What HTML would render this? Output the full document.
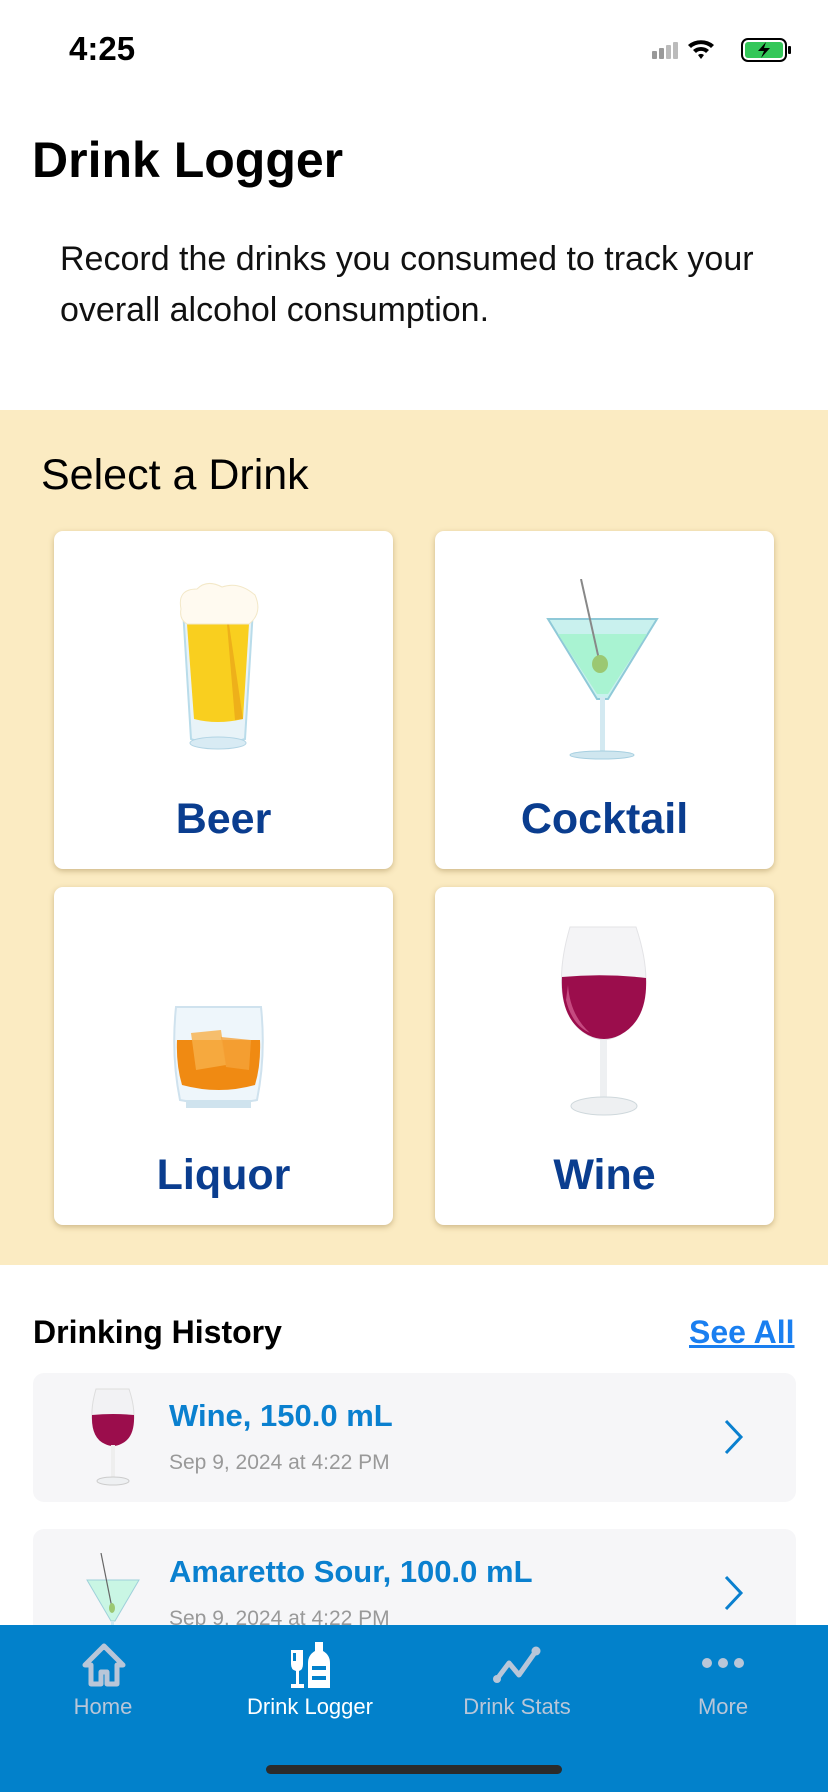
<!DOCTYPE html>
<html><head><meta charset="utf-8"><style>
*{margin:0;padding:0;box-sizing:border-box}
body{width:828px;height:1792px;position:relative;overflow:hidden;background:#fff;font-family:"Liberation Sans",sans-serif}
.abs{position:absolute}
.card{position:absolute;width:339px;height:338px;background:#fff;border-radius:9px;box-shadow:0 2px 6px rgba(120,90,30,.35)}
.lbl{position:absolute;left:0;right:0;text-align:center;font-weight:bold;font-size:43px;color:#0a3d8f;top:264px}
.row{position:absolute;left:33px;width:763px;height:129px;background:#f6f6f8;border-radius:11px}
.rt{position:absolute;left:136px;top:25px;font-weight:bold;font-size:31px;color:#0a80cf}
.rd{position:absolute;left:136px;top:78px;font-size:21px;color:#999}
.tab{position:absolute;top:1694px;width:200px;text-align:center;font-size:22px;color:#b9c6d8}
</style></head><body>
<div class="abs" style="left:69px;top:30px;font-size:33px;font-weight:bold;color:#000">4:25</div>
<svg class="abs" style="left:650px;top:34px" width="148" height="30" viewBox="0 0 148 30">
<rect x="2" y="17" width="5" height="8" rx="1" fill="#999"/><rect x="9" y="14" width="5" height="11" rx="1" fill="#999"/><rect x="16" y="11" width="5" height="14" rx="1" fill="#bbb"/><rect x="23" y="8" width="5" height="17" rx="1" fill="#bbb"/>
<path d="M38 11a20 20 0 0 1 26 0l-3 3a15 15 0 0 0-20 0zM43 16a12 12 0 0 1 16 0l-3 3a7 7 0 0 0-10 0zM48 21a5 5 0 0 1 6 0l-3 4z" fill="#000"/>
<rect x="92" y="5" width="44" height="22" rx="6" fill="none" stroke="#000" stroke-width="2"/><rect x="95" y="8" width="38" height="16" rx="3" fill="#34c759"/><rect x="138" y="12" width="3" height="8" rx="1" fill="#000"/>
<path d="M116 8l-8 9h6l-3 7 9-10h-6z" fill="#000"/></svg>
<div class="abs" style="left:32px;top:131px;font-size:50px;font-weight:bold;color:#000">Drink Logger</div>
<div class="abs" style="left:60px;top:234px;font-size:34px;line-height:51px;color:#111">Record the drinks you consumed to track your<br>overall alcohol consumption.</div>
<div class="abs" style="left:0;top:410px;width:828px;height:855px;background:#fbebc2"></div>
<div class="abs" style="left:41px;top:451px;font-size:43px;color:#000">Select a Drink</div>

<div class="card" style="left:54px;top:531px">
<svg class="abs" style="left:123px;top:48px" width="83" height="177" viewBox="0 0 83 177">
<path d="M6 30 L14 160 Q40 170 68 160 L76 30Z" fill="#e8f3f8" stroke="#b9dcea" stroke-width="2"/>
<path d="M10 45 L17 140 Q40 146 66 140 L72 45Z" fill="#f9cf1f"/>
<path d="M52 45 L66 140 L58 141 L50 45Z" fill="#eeb01a"/>
<path d="M4 30 Q0 10 20 10 Q30 0 45 8 Q62 2 78 16 Q86 34 72 45 L10 45 Q2 40 4 30Z" fill="#fffaf0" stroke="#f3e8c8"/>
<ellipse cx="41" cy="164" rx="28" ry="6" fill="#d8ebf4" stroke="#b2d4e4"/>
</svg><div class="lbl">Beer</div></div>

<div class="card" style="left:435px;top:531px">
<svg class="abs" style="left:111px;top:48px" width="113" height="185" viewBox="0 0 113 185">
<path d="M2 40 L111 40 L62 120 L51 120Z" fill="#c9f1ee" stroke="#8fc9d8" stroke-width="2"/>
<path d="M12 55 L101 55 L62 115 L51 115Z" fill="#a9f3d2"/>
<line x1="35" y1="0" x2="54" y2="85" stroke="#888" stroke-width="2"/>
<ellipse cx="54" cy="85" rx="8" ry="9" fill="#9bc872"/>
<rect x="54" y="118" width="5" height="55" fill="#d3e9f1"/>
<ellipse cx="56" cy="176" rx="32" ry="4" fill="#cfe6ef" stroke="#a6cfe0"/>
</svg><div class="lbl">Cocktail</div></div>

<div class="card" style="left:54px;top:887px">
<svg class="abs" style="left:117px;top:118px" width="95" height="110" viewBox="0 0 95 110">
<path d="M5 2 L90 2 Q95 50 86 95 Q48 103 9 95 Q0 50 5 2Z" fill="#eef6fb" stroke="#cfe2ee" stroke-width="2"/>
<path d="M6 35 L89 35 Q90 60 84 80 Q48 90 11 80 Q5 60 6 35Z" fill="#f08a12"/>
<path d="M20 28 L50 25 L55 60 L25 65Z" fill="#f7b04a" opacity=".8"/>
<path d="M50 32 L80 35 L78 65 L55 62Z" fill="#f5a23a" opacity=".8"/>
<rect x="15" y="95" width="65" height="8" fill="#cfe3ee"/>
</svg><div class="lbl">Liquor</div></div>

<div class="card" style="left:435px;top:887px">
<svg class="abs" style="left:125px;top:38px" width="88" height="196" viewBox="0 0 88 196">
<path d="M10 2 L76 2 Q92 50 82 80 Q70 112 44 115 Q16 112 5 80 Q-4 50 10 2Z" fill="#f4f4f6" stroke="#e3e3e6"/>
<path d="M2 52 Q44 48 86 53 Q88 95 60 110 Q44 118 28 110 Q0 95 2 52Z" fill="#9b0d4c"/>
<path d="M8 60 Q10 90 30 108 Q12 100 6 75Z" fill="#c54a80"/>
<rect x="40" y="115" width="7" height="60" fill="#eef0f2"/>
<ellipse cx="44" cy="181" rx="33" ry="9" fill="#eef0f2" stroke="#cfd8dc"/>
</svg><div class="lbl">Wine</div></div>

<div class="abs" style="left:33px;top:1314px;font-size:32px;font-weight:bold;color:#000">Drinking History</div>
<div class="abs" style="left:689px;top:1314px;font-size:32px;font-weight:bold;color:#1a7ff0;text-decoration:underline">See All</div>

<div class="row" style="top:1373px">
<svg class="abs" style="left:58px;top:15px" width="44" height="100" viewBox="0 0 44 100">
<path d="M5 1 L38 1 Q46 25 41 40 Q35 55 22 57 Q8 55 3 40 Q-2 25 5 1Z" fill="#f2f2f4" stroke="#ddd"/>
<path d="M1 27 Q22 25 43 27 Q44 50 30 56 Q22 60 14 56 Q0 50 1 27Z" fill="#9b0d4c"/>
<rect x="20" y="57" width="4" height="33" fill="#eee"/><ellipse cx="22" cy="93" rx="16" ry="4" fill="#eef0f2" stroke="#ccc"/>
</svg>
<div class="rt">Wine, 150.0 mL</div><div class="rd">Sep 9, 2024 at 4:22 PM</div>
<svg class="abs" style="left:690px;top:46px" width="22" height="36" viewBox="0 0 22 36"><path d="M3 2 L18 18 L3 34" fill="none" stroke="#0a80cf" stroke-width="3"/></svg>
</div>
<div class="row" style="top:1529px">
<svg class="abs" style="left:52px;top:24px" width="56" height="100" viewBox="0 0 56 100">
<path d="M2 27 L54 27 L30 68 L26 68Z" fill="#c9f6e4" stroke="#9fd0da"/>
<line x1="16" y1="0" x2="27" y2="55" stroke="#666" stroke-width="1.2"/>
<ellipse cx="27" cy="55" rx="3" ry="5" fill="#9bc872"/>
<rect x="26" y="68" width="3" height="40" fill="#cfe8f0"/>
</svg>
<div class="rt">Amaretto Sour, 100.0 mL</div><div class="rd">Sep 9, 2024 at 4:22 PM</div>
<svg class="abs" style="left:690px;top:46px" width="22" height="36" viewBox="0 0 22 36"><path d="M3 2 L18 18 L3 34" fill="none" stroke="#0a80cf" stroke-width="3"/></svg>
</div>

<div class="abs" style="left:0;top:1625px;width:828px;height:167px;background:#0281cb"></div>
<svg class="abs" style="left:82px;top:1643px" width="44" height="44" viewBox="0 0 44 44"><path d="M22 3 L3 22 L9 22 L9 41 L19 41 L19 29 L25 29 L25 41 L35 41 L35 22 L41 22Z" fill="none" stroke="#b9c6d8" stroke-width="5" stroke-linejoin="round"/></svg>
<svg class="abs" style="left:288px;top:1640px" width="44" height="50" viewBox="0 0 44 50"><path d="M3 10 h12 v14 q0 6-4 7 v13 h5 v4 h-13 v-4 h5 v-13 q-5-1-5-7z" fill="#fff"/><rect x="5" y="13" width="3" height="8" fill="#0281cb"/><path d="M27 2 h8 v9 q7 4 7 12 v25 h-22 v-25 q0-8 7-12z" fill="#fff"/><rect x="24" y="26" width="14" height="4" fill="#0281cb"/><rect x="24" y="36" width="14" height="4" fill="#0281cb"/></svg>
<svg class="abs" style="left:492px;top:1645px" width="50" height="40" viewBox="0 0 50 40"><path d="M5 34 L17 18 L27 30 L44 6" fill="none" stroke="#b9c6d8" stroke-width="5" stroke-linecap="round" stroke-linejoin="round"/><circle cx="5" cy="34" r="4" fill="#b9c6d8"/><circle cx="44" cy="6" r="4.5" fill="#b9c6d8"/></svg>
<svg class="abs" style="left:700px;top:1653px" width="46" height="20" viewBox="0 0 46 20"><circle cx="7" cy="10" r="5" fill="#b9c6d8"/><circle cx="23" cy="10" r="5" fill="#b9c6d8"/><circle cx="39" cy="10" r="5" fill="#b9c6d8"/></svg>
<div class="tab" style="left:3px">Home</div>
<div class="tab" style="left:210px;color:#fff">Drink Logger</div>
<div class="tab" style="left:417px">Drink Stats</div>
<div class="tab" style="left:623px">More</div>
<div class="abs" style="left:266px;top:1765px;width:296px;height:9px;border-radius:5px;background:#2b2b2b"></div>
</body></html>
